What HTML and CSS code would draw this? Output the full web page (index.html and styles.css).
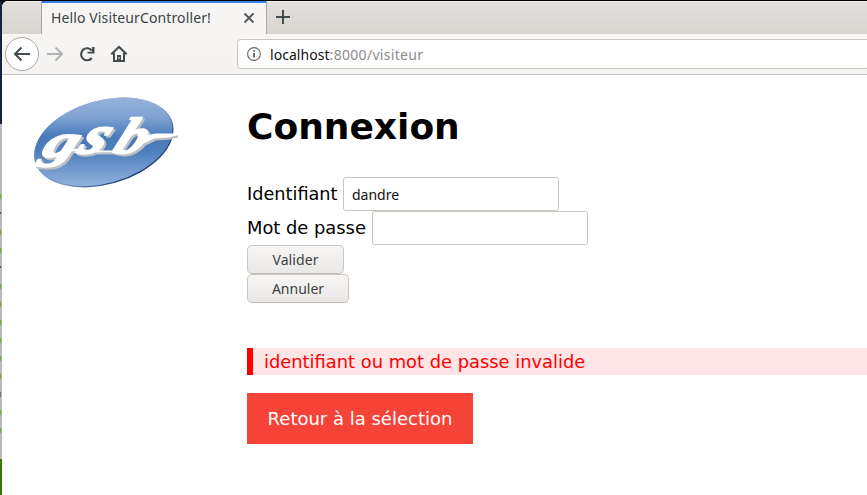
FILE: index.html
```html
<!DOCTYPE html>
<html lang="fr">
<head>
<meta charset="utf-8">
<title>Hello VisiteurController!</title>
<link rel="stylesheet" href="styles.css">
</head>
<body>
<div class="desktop">
  <div class="edge"><i></i><i></i><i></i><i></i><i></i><i></i><i></i><i></i><i></i><i></i><i></i><i></i><i></i><i></i></div>
  <div class="window">
    <div class="tabs">
      <div class="tab"><span class="tab-title">Hello VisiteurController!</span>
        <svg width="12" height="12" viewBox="0 0 12 12"><path d="M1.500 1.500l9 9M10.500 1.500l-9 9" stroke="#50565a" stroke-width="1.800"/></svg>
      </div>
      <svg class="plus" width="16" height="16" viewBox="0 0 16 16"><path d="M1 8h14M8 1v14" stroke="#444b4e" stroke-width="2"/></svg>
    </div>
    <div class="toolbar">
      <div class="back"><svg width="18" height="16" viewBox="0 0 18 16"><path d="M17 8H2M8.500 1.500L2 8l6.500 6.500" fill="none" stroke="#444b4e" stroke-width="2"/></svg></div>
      <svg class="forward" width="18" height="16" viewBox="0 0 18 16"><path d="M1 8h15M9.500 1.500L16 8l-6.500 6.500" fill="none" stroke="#b1b3b3" stroke-width="2"/></svg>
      <svg class="reload" width="16" height="16" viewBox="0 0 16 16"><path d="M12.800 4.600A6 6 0 1 0 12.800 12" fill="none" stroke="#444b4e" stroke-width="2.100"/><path d="M15.500 1v6.500H8.500V5.800h4.600V1z" fill="#444b4e"/></svg>
      <svg class="home" width="18" height="18" viewBox="0 0 18 18"><path d="M1.300 9.300L9 2l7.700 7.300" fill="none" stroke="#444b4e" stroke-width="2"/><path d="M4 8v8h10V8" fill="none" stroke="#444b4e" stroke-width="2"/><path d="M7 10h4v6H7z" fill="#444b4e"/><path d="M9 12v2" stroke="#fff" stroke-width="1"/></svg>
      <div class="address">
        <svg width="14" height="14" viewBox="0 0 14 14"><circle cx="7" cy="7" r="6.400" fill="none" stroke="#686868" stroke-width="1.100"/><path d="M7 6v4.500M7 3.300v1.500" stroke="#555" stroke-width="1.700"/></svg>
        <span class="url"><b>localhost</b>:8000/visiteur</span>
      </div>
    </div>
    <div class="page">
      <svg class="logo" width="170" height="115" viewBox="0 0 170 115" role="img" aria-label="gsb">
        <defs>
          <linearGradient id="blue" gradientUnits="userSpaceOnUse" x1="0" y1="12" x2="0" y2="102"><stop offset="0" stop-color="#97b3da"/><stop offset=".22" stop-color="#7fa3d2"/><stop offset=".45" stop-color="#4879b9"/><stop offset=".6" stop-color="#4d7fbd"/><stop offset="1" stop-color="#94b2dc"/></linearGradient>
          <linearGradient id="rim" x1="0" y1="0" x2="1" y2="1"><stop offset=".5" stop-color="#7196c8"/><stop offset=".8" stop-color="#193b6e"/></linearGradient>
          <clipPath id="oval"><ellipse cx="83.500" cy="56.800" rx="71" ry="41.400" transform="rotate(-16 83.500 56.800)"/></clipPath>
          <g id="mark">
            <g font-family="Liberation Serif" font-style="italic" font-weight="bold" stroke-linejoin="round">
              <text transform="translate(20 71.500) skewX(-22) scale(1.450 1)" font-size="47" stroke-width="1.600">g</text>
              <text transform="translate(56 67.500) skewX(-28) scale(1.200 1)" font-size="54" stroke-width="2.200">s</text>
              <text transform="translate(91 67.500) skewX(-23) scale(1.200 1)" font-size="51" stroke-width="1.600">b</text>
            </g>
            <path d="M40 68L48 65H62M76 66.500H97M117 60Q126 50 136 49.500H156L148 51.500L134 52.500Q126 57 117 60z" stroke-width="2"/>
          </g>
        </defs>
        <ellipse cx="83.800" cy="57.500" rx="71.500" ry="42" transform="rotate(-16 83.800 57.500)" fill="url(#rim)"/>
        <rect width="170" height="115" fill="url(#blue)" clip-path="url(#oval)"/>
        <use href="#mark" class="mark-shadow"/>
        <use href="#mark" class="mark-face"/>
      </svg>
      <main>
        <h1>Connexion</h1>
        <form>
          <div class="row"><label for="id">Identifiant</label><input id="id" type="text" value="dandre"></div>
          <div class="row"><label for="pw">Mot de passe</label><input id="pw" type="password"></div>
          <button class="valider" type="button">Valider</button>
          <button class="annuler" type="button">Annuler</button>
        </form>
        <p class="error">identifiant ou mot de passe invalide</p>
        <a class="return">Retour à la sélection</a>
      </main>
    </div>
  </div>
</div>
</body>
</html>
```
FILE: styles.css
```css
* { box-sizing: border-box; }
body { margin: 0; overflow: hidden; background: #000; font-family: "Noto Sans", sans-serif; }
.desktop { display: flex; width: 867px; height: 495px; padding-top: 1px; }
.edge { width: 2px; padding-top: 193px; background: linear-gradient(#17233e 0 123px, #b9b9b9 123px 458px, #367a05 458px); }
.edge i { display: block; width: 1px; height: 5px; margin-bottom: 13px; background: #65b52b; }
.edge i:nth-child(2), .edge i:nth-child(5) { background: #555; height: 2px; margin-bottom: 16px; }
.edge i:nth-child(12) { background: #777; }
.window { flex: 1; min-width: 0; background: #fff; border-top-left-radius: 6px; overflow: hidden; }
.tabs { display: flex; height: 33px; background: linear-gradient(#e2dfdc, #d8d5d1 32px, #999792 32px); border-top: 1px solid #f0eeec; padding-left: 39px; }
.tab { display: flex; align-items: center; justify-content: space-between; width: 226px; height: 33px; margin-top: -1px; padding: 0 11px 0 9px; background: #f6f5f4; border: solid #aaa7a2; border-width: 0 1px; box-shadow: inset 0 2px #3584e4; color: #3c4245; font-size: 14px; }
.tab-title { letter-spacing: .12px; white-space: nowrap; }
.plus { margin: 7px 0 0 8px; }
.toolbar { display: flex; align-items: center; height: 41px; background: linear-gradient(#f7f6f5, #f4f3f1); border-bottom: 1px solid #cbc6c0; padding-left: 3px; }
.back { display: grid; place-items: center; width: 34px; height: 34px; border: 1px solid #aaa8a5; border-radius: 50%; background: #fff; }
.forward { margin-left: 7px; }
.reload { margin-left: 15px; }
.home { margin-left: 15px; }
.address { display: flex; align-items: center; flex: 1; height: 30px; margin-left: 109px; padding-left: 9px; background: #fff; border: 1px solid #cbc6c0; border-right: 0; border-radius: 4px 0 0 4px; }
.url { margin-left: 9px; font-size: 14px; letter-spacing: .3px; color: #8b8b8b; white-space: nowrap; }
.url b { font-weight: 400; color: #111; letter-spacing: .05px; }
.page { display: flex; align-items: flex-start; height: 420px; padding-left: 18px; font-family: "DejaVu Sans", sans-serif; font-size: 17.870px; }
.logo { flex: none; margin-top: 10px; }
.mark-shadow { fill: #bec0c3; stroke: #bec0c3; transform: translate(2px, 2px); }
.mark-face { fill: #fff; stroke: #fff; }
main { flex: 1; margin-left: 57px; min-width: 0; }
h1 { margin: 31px 0 29px; font-size: 36px; line-height: 42px; }
.row { display: flex; align-items: center; height: 34px; white-space: nowrap; }
label { width: 125px; padding-bottom: 2px; }
label[for="id"] { width: 96px; padding-bottom: 0; font-size: 17.700px; }
input { width: 216px; height: 34px; padding: 0 8px; border: 1px solid #cbc6c0; border-radius: 3px; background: #fff; font: 14px "Noto Sans", sans-serif; color: #111; outline: 0; }
button { display: block; height: 29px; padding: 0; border: 1px solid #cbc6c0; border-bottom-color: #c0b9b1; border-radius: 5px; background: linear-gradient(#f7f6f5, #eae8e7); font: 14px "Noto Sans", sans-serif; letter-spacing: .1px; color: #3c4245; }
.valider { width: 97px; }
.annuler { width: 102px; letter-spacing: 0; }
.error { height: 27px; margin: 45px 0 18px; padding-left: 11px; border-left: 6px solid #f00; background: #ffe5e5; color: #f00; line-height: 27px; white-space: nowrap; }
.return { display: block; width: 226px; height: 51px; background: #f64337; color: #fff; font-size: 18px; text-align: center; line-height: 51px; white-space: nowrap; }
```
